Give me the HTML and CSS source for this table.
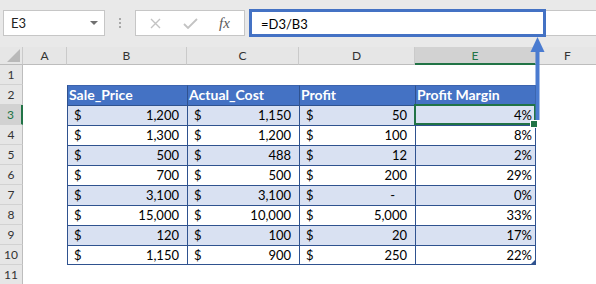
FILE: index.html
```html
<!DOCTYPE html>
<html lang="en">
<head>
    <meta charset="UTF-8">
    <title>Profit Margin</title>
    <link rel="stylesheet" href="styles.css">
</head>
<body>
    <div class="toolbar">
        <div class="name-box"><span>E3</span><span class="caret"></span></div>
        <div class="grip"><i></i><i></i><i></i></div>
        <div class="fx-bar">
            <svg class="cancel" width="11" height="11" viewBox="0 0 11 11"><path d="M1 1L10 10M10 1L1 10" stroke="#c3c3c3" stroke-width="1.4" fill="none"/></svg>
            <svg class="enter" width="15" height="11" viewBox="0 0 15 11"><path d="M1 6L5 10L14 1" stroke="#c3c3c3" stroke-width="1.8" fill="none"/></svg>
            <span class="fx">fx</span>
        </div>
        <div class="formula-box">=D3/B3</div>
        <div class="formula-rest"></div>
    </div>

    <div class="sheet">
        <div class="ch corner"></div>
        <div class="ch">A</div>
        <div class="ch">B</div>
        <div class="ch">C</div>
        <div class="ch">D</div>
        <div class="ch ch-sel">E</div>
        <div class="ch">F</div>

        <div class="rh">1</div>
        <div></div><div></div><div></div><div></div><div></div><div></div>

        <div class="rh">2</div>
        <div></div>
        <div class="th">Sale_Price</div>
        <div class="th">Actual_Cost</div>
        <div class="th">Profit</div>
        <div class="th last">Profit Margin</div>
        <div></div>

        <div class="rh rh-sel">3</div>
        <div></div>
        <div class="td alt acc"><span>$</span><span>1,200</span></div>
        <div class="td alt acc"><span>$</span><span>1,150</span></div>
        <div class="td alt acc"><span>$</span><span>50</span></div>
        <div class="td alt pct last sel">4%</div>
        <div></div>

        <div class="rh">4</div>
        <div></div>
        <div class="td acc"><span>$</span><span>1,300</span></div>
        <div class="td acc"><span>$</span><span>1,200</span></div>
        <div class="td acc"><span>$</span><span>100</span></div>
        <div class="td pct last">8%</div>
        <div></div>

        <div class="rh">5</div>
        <div></div>
        <div class="td alt acc"><span>$</span><span>500</span></div>
        <div class="td alt acc"><span>$</span><span>488</span></div>
        <div class="td alt acc"><span>$</span><span>12</span></div>
        <div class="td alt pct last">2%</div>
        <div></div>

        <div class="rh">6</div>
        <div></div>
        <div class="td acc"><span>$</span><span>700</span></div>
        <div class="td acc"><span>$</span><span>500</span></div>
        <div class="td acc"><span>$</span><span>200</span></div>
        <div class="td pct last">29%</div>
        <div></div>

        <div class="rh">7</div>
        <div></div>
        <div class="td alt acc"><span>$</span><span>3,100</span></div>
        <div class="td alt acc"><span>$</span><span>3,100</span></div>
        <div class="td alt acc zero"><span>$</span><span>-</span></div>
        <div class="td alt pct last">0%</div>
        <div></div>

        <div class="rh">8</div>
        <div></div>
        <div class="td acc"><span>$</span><span>15,000</span></div>
        <div class="td acc"><span>$</span><span>10,000</span></div>
        <div class="td acc"><span>$</span><span>5,000</span></div>
        <div class="td pct last">33%</div>
        <div></div>

        <div class="rh">9</div>
        <div></div>
        <div class="td alt acc"><span>$</span><span>120</span></div>
        <div class="td alt acc"><span>$</span><span>100</span></div>
        <div class="td alt acc"><span>$</span><span>20</span></div>
        <div class="td alt pct last">17%</div>
        <div></div>

        <div class="rh">10</div>
        <div></div>
        <div class="td acc end"><span>$</span><span>1,150</span></div>
        <div class="td acc end"><span>$</span><span>900</span></div>
        <div class="td acc end"><span>$</span><span>250</span></div>
        <div class="td pct last end resize">22%</div>
        <div></div>

        <div class="rh">11</div>
        <div></div><div></div><div></div><div></div><div></div><div></div>
    </div>

    <!-- callout from E3 up to the formula bar -->
    <svg class="arrow" width="18" height="86" viewBox="0 0 18 86">
        <rect x="6.5" y="14" width="4" height="70" fill="#4a7bd0"/>
        <polygon points="8.5,1 1.5,16 15.5,16" fill="#4a7bd0"/>
    </svg>
</body>
</html>
```

FILE: styles.css
```css
* {
    box-sizing: border-box;
    margin: 0;
    padding: 0;
}

body {
    width: 596px;
    height: 284px;
    overflow: hidden;
    background-color: white;
    font-family: Lato, "Open Sans", sans-serif;
    font-size: 13px;
    color: #000;
    position: relative;
}

/* formula bar */

.toolbar {
    display: flex;
    align-items: flex-start;
    height: 47px;
    padding-top: 10px;
    background-color: #e9e9e9;
}

.name-box {
    display: flex;
    align-items: center;
    width: 102px;
    height: 26px;
    margin-left: 3px;
    padding-left: 7px;
    background-color: white;
    border: 1px solid #c6c6c6;
    color: #222;
}

.caret {
    margin-left: auto;
    margin-right: 6px;
    border-left: 4px solid transparent;
    border-right: 4px solid transparent;
    border-top: 4px solid #707070;
}

.grip {
    display: flex;
    flex-direction: column;
    align-items: center;
    gap: 2px;
    width: 30px;
    padding-top: 8px;
}

.grip i {
    width: 2px;
    height: 2px;
    background-color: #a8a8a8;
}

.fx-bar {
    display: flex;
    align-items: center;
    width: 110px;
    height: 26px;
    background-color: white;
    border: 1px solid #c6c6c6;
}

.cancel {
    margin-left: 14px;
}

.enter {
    margin-left: 22px;
}

.fx {
    margin-left: 21px;
    font-family: "Liberation Serif", serif;
    font-style: italic;
    font-size: 15px;
    color: #5a5a5a;
}

.formula-box {
    width: 297px;
    height: 28px;
    margin-left: 4px;
    margin-top: -1px;
    padding: 1px 0 0 9px;
    line-height: 22px;
    background-color: white;
    border: 3px solid #4472c4;
}

.formula-rest {
    flex: 1;
    height: 26px;
    background-color: white;
    border-top: 1px solid #c6c6c6;
    border-bottom: 1px solid #c6c6c6;
}

/* grid */

.sheet {
    display: grid;
    grid-template-columns: 23px 44px 120px 112px 116px 121px 64px;
    grid-template-rows: 18px repeat(11, 20px);
}

.ch {
    background-color: #e6e6e6;
    border-right: 1px solid #cacaca;
    border-bottom: 1px solid #bdbdbd;
    text-align: center;
    font-size: 12px;
    line-height: 17px;
    color: #333;
}

.ch-sel {
    background-color: #d2d2d2;
    border-bottom: 2px solid #217346;
    color: #217346;
}

.corner {
    position: relative;
}

.corner::after {
    content: "";
    position: absolute;
    right: 2px;
    bottom: 2px;
    border-left: 13px solid transparent;
    border-bottom: 13px solid #b9b9b9;
}

.rh {
    background-color: #e6e6e6;
    border-right: 1px solid #bdbdbd;
    border-bottom: 1px solid #d2d2d2;
    text-align: center;
    font-size: 12px;
    line-height: 20px;
    color: #333;
}

.rh-sel {
    background-color: #d2d2d2;
    border-right: 2px solid #217346;
    color: #217346;
}

/* table */

.th {
    background-color: #4472c4;
    border-left: 1px solid #2f528f;
    border-top: 1px solid #3b63ad;
    padding-left: 1px;
    color: white;
    font-size: 14px;
    font-weight: bold;
    line-height: 18px;
    white-space: nowrap;
}

.td {
    border-left: 1px solid #2f528f;
    border-top: 1px solid #2f528f;
    line-height: 19px;
    background-color: white;
}

.alt {
    background-color: #d9e1f2;
}

.last {
    border-right: 1px solid #2f528f;
}

.end {
    border-bottom: 1px solid #2f528f;
}

.acc {
    display: flex;
    justify-content: space-between;
    padding: 0 8px 0 6px;
}

.zero {
    padding-right: 20px;
}

.pct {
    text-align: right;
    padding-right: 3px;
}

.sel {
    position: relative;
}

.sel::after {
    content: "";
    position: absolute;
    top: -2px;
    left: -2px;
    right: -1px;
    bottom: 0;
    border: 2px solid #217346;
}

.sel::before {
    content: "";
    position: absolute;
    right: -3px;
    bottom: -3px;
    width: 6px;
    height: 6px;
    background-color: #217346;
    border: 1px solid white;
    z-index: 2;
}

.resize {
    position: relative;
}

.resize::after {
    content: "";
    position: absolute;
    right: 0;
    bottom: 0;
    border-left: 4px solid transparent;
    border-bottom: 4px solid #2f528f;
}

.arrow {
    position: absolute;
    left: 529px;
    top: 36px;
    z-index: 5;
}
```
